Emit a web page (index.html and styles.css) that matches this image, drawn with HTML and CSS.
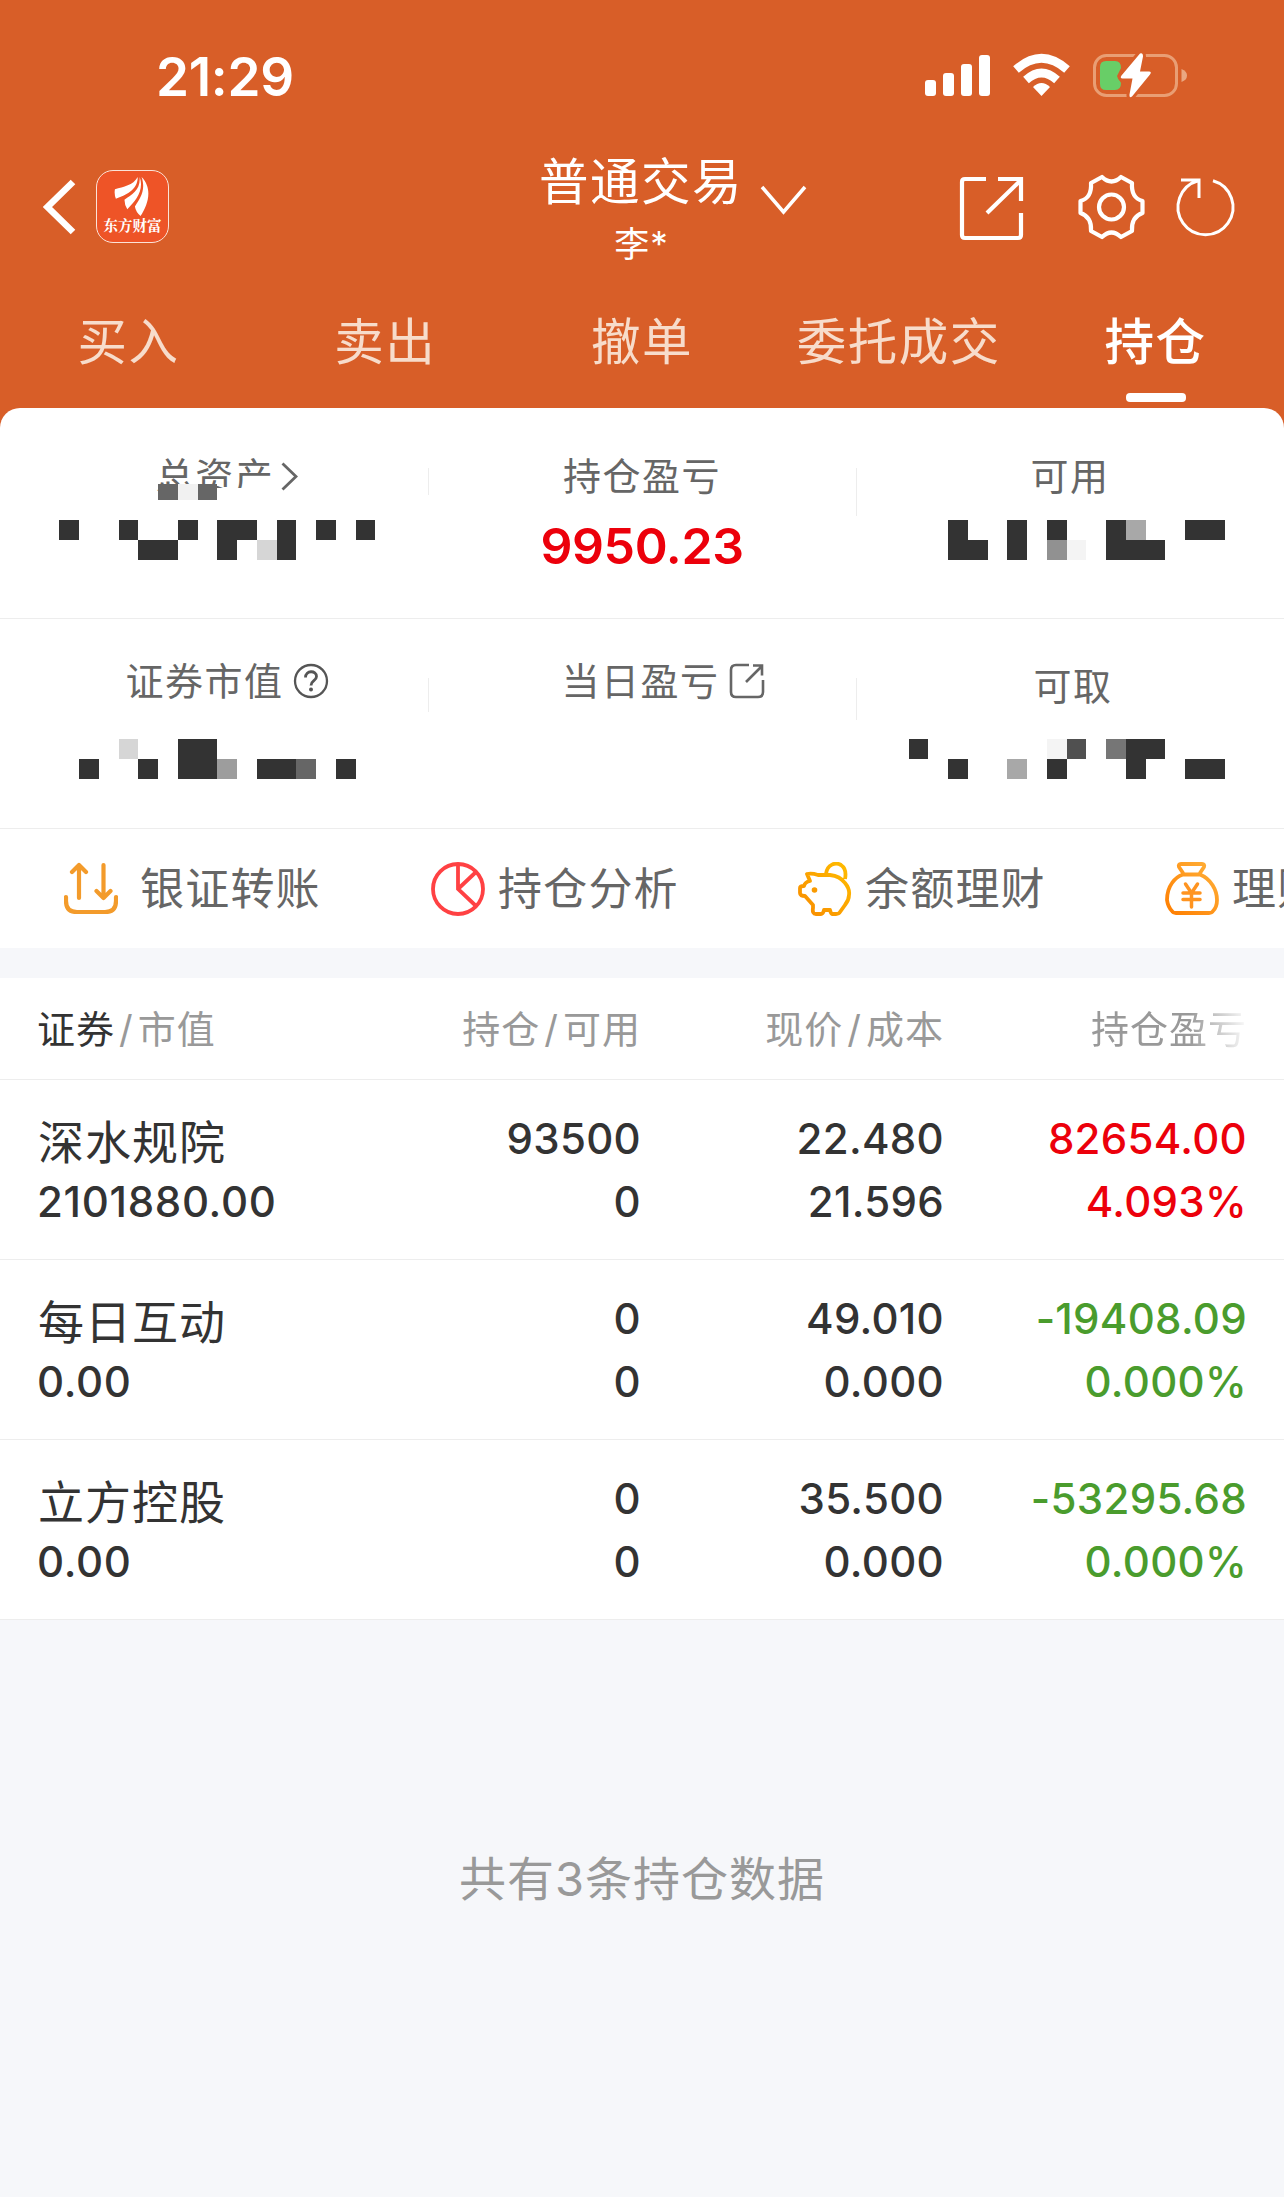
FILE: index.html
```html
<!DOCTYPE html>
<html lang="zh-CN">
<head>
<meta charset="utf-8">
<title>普通交易 - 持仓</title>
<link rel="stylesheet" href="styles.css">
</head>
<body>
<header class="top">
  <div class="status">
    <span class="clock">21:29</span>
    <svg class="status-icons" width="264" height="48" viewBox="924 52 264 48">
      <g fill="#fff">
        <rect x="925" y="80" width="11" height="16" rx="3"/>
        <rect x="943" y="73" width="11" height="23" rx="3"/>
        <rect x="961" y="64" width="11" height="32" rx="3"/>
        <rect x="979" y="55" width="11" height="41" rx="3"/>
        <path d="M1041.500 96l-8.500-9q8.500-8 17 0z"/>
      </g>
      <g fill="none" stroke="#fff" stroke-width="8.500">
        <path d="M1016 69.500q25.500-22.500 51 0"/>
        <path d="M1026 80q15.500-14 31 0"/>
      </g>
      <rect x="1094.500" y="55.500" width="82" height="40" rx="12" fill="none" stroke="#e99e74" stroke-width="3"/>
      <path d="M1181.500 69q5.500 2 5.500 6.500t-5.500 6.500z" fill="#eaa781"/>
      <path d="M1106 61h9q6 0 6 7l-4 8 4 7q0 7-6 7h-9q-6 0-6-6V67q0-6 6-6z" fill="#68ce67"/>
      <path d="M1140 53.500q3-1 3 3l-3 15h9q3 0 1 3l-18 22q-3 2-2.500-2l3-16h-10q-3-.5-1-3z" fill="#fff" stroke="#d85e28" stroke-width="6" paint-order="stroke"/>
    </svg>
  </div>
  <div class="nav">
    <div class="nav-left">
      <svg width="34" height="56" viewBox="43 179 34 56" fill="none" stroke="#fff" stroke-width="6.500"><path d="M73 182L47.500 207 73 232"/></svg>
      <div class="logo">
        <svg width="40" height="42" viewBox="0 0 40 42" fill="#fff"><path d="M25 1C20 10 10 11 1 14q-1 5 1 10C12 20 25 15 25 1zM27 1c1 14-8 18-16 24q0 5 3 10C23 26 32 15 27 1zM29 1c5 14-2 23-7 31q1 6 6 10C36 30 41 13 29 1z"/></svg>
        <span>东方财富</span>
      </div>
    </div>
    <div class="account">
      <div class="account-text"><b>普通交易</b><small>李*</small></div>
      <svg width="48" height="32" viewBox="760 184 48 32" fill="none" stroke="#fff" stroke-width="3.500"><path d="M762 187l21.500 25L805 187"/></svg>
    </div>
    <svg class="nav-icons" width="280" height="70" viewBox="958 172 280 70" fill="none" stroke="#fff" stroke-width="4.200">
      <path d="M986 179H965q-3 0-3 3v53q0 3 3 3h53q3 0 3-3v-22M998 179h23v22M1020 181l-33 32"/>
      <path d="M1102 177q9.500 9 19 0l11 6q-1 15 10.500 18v12q-11.500 4-10.500 18l-11 6q-9.500-9-19 0l-11-6q1-14-10.500-18v-12q11.500-3 10.500-18z" stroke-linejoin="round"/>
      <circle cx="1111.500" cy="207" r="12.500"/>
      <path stroke-width="3" d="M1181 180h18v18M1198 180.700A27.500 27.500 0 1 0 1213 180.700"/>
    </svg>
  </div>
  <nav class="tabs"><a>买入</a><a>卖出</a><a>撤单</a><a>委托成交</a><a class="on">持仓</a></nav>
</header>
<main>
  <section class="summary">
    <div class="cell left">
      <h3>总资产<svg class="more" width="17" height="30" viewBox="280 462 17 30" fill="none" stroke="#666" stroke-width="2.800"><path d="M281.500 464.500l13.500 13L281.500 490.500"/></svg></h3>
      <svg class="mosaic" width="428" height="100" viewBox="0 480 428 100" fill="#333" shape-rendering="crispEdges">
        <path fill="#fff" d="M158 484h59v4h60v14H158z"/>
        <path fill="#666" d="M158 484h20v16h-20zM198 484h19v16h-19z"/><path fill="#f1f1f1" d="M178 484h20v16h-20z"/>
        <path d="M59 520h20v20H59zM119 520h19v20h-19zM178 520h20v20h-20zM217 520h40v20h-20v20h-20zM277 520h19v40h-19zM316 520h20v20h-20zM356 520h19v20h-19zM138 540h40v20h-40z"/>
        <path fill="#d6d6d6" d="M257 540h20v20h-20z"/>
      </svg>
    </div>
    <div class="cell mid tick-a"><h3>持仓盈亏</h3><strong>9950.23</strong></div>
    <div class="cell right tick-b">
      <h3>可用</h3>
      <svg class="mosaic" width="428" height="100" viewBox="856 480 428 100" fill="#333" shape-rendering="crispEdges">
        <path d="M948 520h20v20h20v20h-40zM1007 520h20v40h-20zM1047 520h20v20h-20zM1106 520h20v20h39v20h-59zM1185 520h40v20h-40z"/>
        <path fill="#919191" d="M1047 540h20v20h-20z"/><path fill="#f4f4f4" d="M1067 540h19v20h-19z"/><path fill="#a8a8a8" d="M1126 520h20v20h-20z"/>
      </svg>
    </div>
  </section>
  <section class="summary second">
    <div class="cell left">
      <h3>证券市值<svg width="36" height="36" viewBox="0 0 36 36" fill="none" stroke="#555" stroke-width="2.300"><circle cx="18" cy="18" r="16"/><path d="M12.500 14.500c0-7.500 11-7.500 11-1 0 4.500-5.500 4-5.500 9" stroke-width="2.800"/><circle cx="18" cy="26.500" r="2" fill="#555" stroke="none"/></svg></h3>
      <svg class="mosaic" width="428" height="100" viewBox="0 695 428 100" fill="#333" shape-rendering="crispEdges">
        <path d="M178 739h39v40h-39zM79 759h20v20H79zM138 759h20v20h-20zM257 759h39v20h-39zM336 759h20v20h-20z"/>
        <path fill="#d6d6d6" d="M119 739h19v20h-19z"/><path fill="#9d9d9d" d="M217 759h20v20h-20z"/><path fill="#666" d="M296 759h20v20h-20z"/>
      </svg>
    </div>
    <div class="cell mid tick-c"><h3>当日盈亏<svg width="36" height="36" viewBox="0 0 36 36" fill="none" stroke="#666" stroke-width="2.600"><path d="M20 2H7Q2 2 2 7v22q0 5 5 5h22q5 0 5-5V17M24 2.500h9v10M33 3L17 19"/></svg></h3></div>
    <div class="cell right tick-d">
      <h3>可取</h3>
      <svg class="mosaic" width="428" height="100" viewBox="856 695 428 100" fill="#333" shape-rendering="crispEdges">
        <path d="M909 739h19v20h-19zM948 759h20v20h-20zM1047 759h20v20h-20zM1126 739h39v20h-19v20h-20zM1185 759h40v20h-40z"/>
        <path fill="#a8a8a8" d="M1007 759h20v20h-20z"/><path fill="#f4f4f4" d="M1047 739h20v20h-20z"/><path fill="#505050" d="M1067 739h19v20h-19z"/><path fill="#767676" d="M1106 739h20v20h-20z"/>
      </svg>
    </div>
  </section>
  <section class="actions">
    <a class="wide"><svg width="54" height="54" viewBox="0 0 54 54" fill="none" stroke="#f39b2b" stroke-width="4.200" stroke-linecap="round" stroke-linejoin="round"><path d="M2 35v4q0 11 11 11h28q11 0 11-11v-4M15 36V3M8 10l7-7 7 7M39.500 3v33M32.500 29l7 7 7-7"/></svg><span>银证转账</span></a>
    <a><svg width="54" height="54" viewBox="0 0 54 54" fill="none" stroke="#ff4143" stroke-width="3.800"><circle cx="27" cy="27" r="25"/><path d="M27 2v25l18 17M27 27L45 10"/></svg><span>持仓分析</span></a>
    <a><svg width="54" height="54" viewBox="0 0 54 54" fill="none" stroke="url(#pig)" stroke-width="3.800" stroke-linejoin="round"><defs><linearGradient id="pig" x1="1" y1="0" x2="0" y2="1"><stop offset="0" stop-color="#ffbd00"/><stop offset="1" stop-color="#f88b00"/></linearGradient></defs><path d="M12 19l-3-7q5-1 11 1h12q10 1 15 8 5 6 4 12 0 5-4 10l-5 7q-1 2-4 2h-4q-1 0-2-4h-6q-1 4-3 4h-5q-4 0-3-6v-3L7 34q-5 0-5-3v-5q0-2 4-2 1-4 6-5zM28 12C29 2 38 0 43 3q6 4 4 14"/><circle cx="16.500" cy="28" r="2.800" fill="#f99a00" stroke="none"/></svg><span>余额理财</span></a>
    <a><svg width="54" height="54" viewBox="0 0 54 54" fill="none" stroke="url(#bag)" stroke-width="3.800" stroke-linejoin="round" stroke-linecap="round"><defs><linearGradient id="bag" x1="1" y1="0" x2="0" y2="1"><stop offset="0" stop-color="#ffb13a"/><stop offset="1" stop-color="#ff7e00"/></linearGradient></defs><path d="M18 11l-4-6q-1-3 2-3h21q3 0 2 3l-4 6M18 12.500h17C46 17 52 28 52 38q0 7-4 11-1 2-4 2H11q-3 0-4-2-4-4-5-11 0-10 5-17 4-6 11-8.500z"/><path stroke="#ff9420" stroke-width="3.500" d="M20.500 22l6 9 6-9M26.500 31v14M18 31h17M18 37.500h17"/></svg><span>理财</span></a>
  </section>
  <section class="table">
    <div class="row head"><span><em>证券</em><i>/</i>市值</span><span>持仓<i>/</i>可用</span><span>现价<i>/</i>成本</span><span class="fade">持仓盈亏</span></div>
    <div class="row"><div><b>深水规院</b><p>2101880.00</p></div><div><p>93500</p><p>0</p></div><div><p>22.480</p><p>21.596</p></div><div class="up"><p>82654.00</p><p>4.093%</p></div></div>
    <div class="row"><div><b>每日互动</b><p>0.00</p></div><div><p>0</p><p>0</p></div><div><p>49.010</p><p>0.000</p></div><div class="down"><p>-19408.09</p><p>0.000%</p></div></div>
    <div class="row"><div><b>立方控股</b><p>0.00</p></div><div><p>0</p><p>0</p></div><div><p>35.500</p><p>0.000</p></div><div class="down"><p>-53295.68</p><p>0.000%</p></div></div>
  </section>
</main>
<footer>共有3条持仓数据</footer>
</body>
</html>
```
FILE: styles.css
```css
* { box-sizing: border-box; margin: 0; padding: 0; }
body {
  width: 1284px;
  height: 2197px;
  overflow: hidden;
  background: #f6f7fa;
  color: #333;
  font-family: Inter, "Noto Sans CJK SC", sans-serif;
}
svg { display: block; flex: none; }
b, h3, em, i { font-weight: 400; font-style: normal; }

.top { height: 428px; background: #d85e28; color: #fff; }
.status { display: flex; justify-content: space-between; height: 150px; padding: 52px 96px 0 156px; }
.clock { font-size: 53px; font-weight: 600; line-height: 51px; letter-spacing: -0.3px; }
.nav { display: grid; grid-template-columns: 300px 1fr 326px; height: 144px; }
.nav-left { display: flex; align-items: flex-start; padding: 29px 0 0 43px; }
.nav-left > svg { margin-right: 19px; }
.logo {
  display: flex; flex-direction: column; align-items: center;
  width: 73px; height: 73px; margin-top: -9px; padding-top: 5px;
  border: 1.5px solid #fbe3d8; border-radius: 17px; background: #ee5427;
}
.logo svg { width: 38px; height: 40px; }
.logo span { font: 700 14.5px/18px "Noto Serif CJK SC", "Noto Sans CJK SC", sans-serif; white-space: nowrap; }
.account { display: flex; padding-left: 240px; }
.account-text { display: flex; flex-direction: column; align-items: center; width: 200px; }
.account-text b { margin-left: 2px; font-size: 49.5px; line-height: 64px; letter-spacing: 1.5px; white-space: nowrap; }
.account-text small { margin: 8px 0 0 3px; font-size: 35px; line-height: 44px; letter-spacing: 1px; }
.account > svg { margin: 34px 0 0 20px; }
.nav-icons { margin-top: 22px; }
.tabs { display: grid; grid-template-columns: repeat(5, 1fr); height: 114px; }
.tabs a { display: flex; flex-direction: column; align-items: center; padding-top: 18px; font-size: 49.5px; line-height: 60px; letter-spacing: 1.5px; color: #f7dccb; }
.tabs .on { font-weight: 500; color: #fff; }
.tabs .on::after { content: ""; width: 60px; height: 9px; margin-top: 21px; border-radius: 4px; background: #fff; }

main { margin-top: -20px; border-radius: 20px 20px 0 0; background: #fff; }
.summary { display: grid; grid-template-columns: 428px 428px 428px; height: 211px; border-bottom: 1px solid #ededed; }
.second { height: 210px; }
.cell { position: relative; display: flex; flex-direction: column; align-items: center; padding-top: 44px; }
.left { padding-left: 26px; }
.cell h3 { display: flex; align-items: center; font-size: 38px; line-height: 48px; letter-spacing: 1.5px; color: #666; }
.cell h3 svg { margin-left: 9px; }
.cell h3 .more { margin-left: 7px; }
.cell strong { margin-top: 16px; font-size: 50px; font-weight: 600; line-height: 60px; letter-spacing: -0.4px; color: #ec000b; }
.mosaic { position: absolute; left: 0; top: 72px; }
.second .mosaic { top: 76px; }
.second .cell { padding-top: 38px; }
.second .cell.right { padding: 43px 0 0 6px; }
.second .cell.mid { padding-left: 42px; }
.mid, .right { background: linear-gradient(#ededed, #ededed) no-repeat 0 60px / 1px 27px; }
.tick-b { background-size: 1px 48px; }
.tick-c { background-position: 0 59px; background-size: 1px 34px; }
.tick-d { background-position: 0 59px; background-size: 1px 42px; }

.actions { display: flex; height: 119px; padding-left: 64px; overflow: hidden; }
.actions a { display: flex; flex: none; align-items: center; gap: 13px; width: 367px; font-size: 44px; letter-spacing: 1.2px; color: #666; white-space: nowrap; }
.actions span { padding-bottom: 5px; }
.actions .wide { gap: 22px; }

.table { border-top: 30px solid #f6f7fa; }
.row { display: grid; grid-template-columns: 300px 304px 303px 303px; height: 180px; padding: 29px 37px 0; border-bottom: 1px solid #ededed; font-size: 42px; font-weight: 500; letter-spacing: 0.3px; text-align: right; }
.row > :first-child { text-align: left; }
.row p { line-height: 63px; height: 63px; }
.row p:first-child { margin-top: -2px; }
.row b + p { letter-spacing: 0.7px; }
.row b { display: block; height: 61px; padding-left: 1px; font-size: 46px; line-height: 66px; letter-spacing: 1px; }
.head { height: 102px; padding-top: 23px; font-size: 38px; font-weight: 400; line-height: 56px; letter-spacing: 1px; color: #999; }
.head em { color: #333; }
.head i { padding: 0 4px; }
.fade { -webkit-mask-image: linear-gradient(90deg, #000 245px, transparent 306px); mask-image: linear-gradient(90deg, #000 245px, transparent 306px); }
.up { color: #ec000b; }
.down { color: #4a9c2d; }

footer { padding-top: 229px; text-align: center; font-size: 47px; line-height: 60px; letter-spacing: 1px; color: #999; }
```
